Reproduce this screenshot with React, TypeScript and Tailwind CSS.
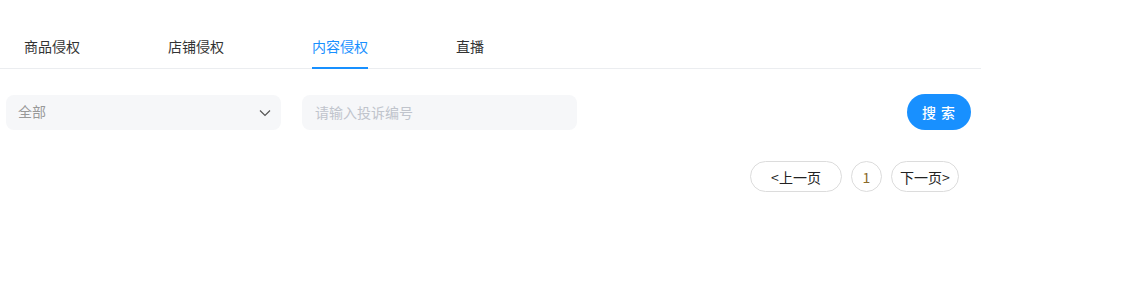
import React, { useState } from 'react';

const tabs = ['商品侵权', '店铺侵权', '内容侵权', '直播'];

const App = () => {
  const [active, setActive] = useState(2);
  const [keyword, setKeyword] = useState('');

  return (
    <div className="w-[981px] bg-white font-['Noto_Sans_CJK_SC','Noto_Sans',sans-serif]">
      {/* Tabs */}
      <div className="flex gap-[88px] border-b border-[#ebedf0] pl-6 pt-[36px]">
        {tabs.map((t, i) => (
          <button
            key={t}
            onClick={() => setActive(i)}
            className={`relative pb-[11px] text-sm leading-[21px] ${i === active ? 'text-[#1890ff]' : 'text-[#333]'}`}
          >
            {t}
            {i === active && <span className="absolute -bottom-px left-0 h-[2px] w-full bg-[#1890ff]"></span>}
          </button>
        ))}
      </div>

      {/* Filters */}
      <div className="mt-[25px] flex items-center pl-[6px] pr-[10px]">
        <div className="flex h-[35px] w-[275px] items-center justify-between rounded-[8px] bg-[#f6f7f9] pl-3 pr-[10px]">
          <span className="pb-[3px] text-sm text-[#999]">全部</span>
          <svg width="12" height="8" viewBox="0 0 12 8" fill="none" className="mt-[1px]">
            <path d="M1 1.5 L6 6.5 L11 1.5" stroke="#555" strokeWidth="1.2" />
          </svg>
        </div>
        <input
          value={keyword}
          onChange={e => setKeyword(e.target.value)}
          placeholder="请输入投诉编号"
          className="ml-[21px] h-[35px] w-[275px] rounded-[8px] bg-[#f6f7f9] px-[13px] text-sm text-[#333] outline-none placeholder:text-[#c0c4cc]"
        />
        <button className="ml-auto h-9 w-16 rounded-full bg-[#1890ff] text-sm font-medium tracking-[1px] text-white">
          搜 索
        </button>
      </div>

      {/* Pagination */}
      <div className="mt-[31px] flex justify-end gap-[9px] pr-[22px]">
        <button className="h-[31px] w-[92px] rounded-full border border-[#dcdcdc] text-sm text-[#222]">&lt;上一页</button>
        <button className="h-[31px] w-[31px] rounded-full border border-[#dcdcdc] text-sm text-[#8a6a2a]">1</button>
        <button className="h-[31px] w-[68px] rounded-full border border-[#dcdcdc] text-sm text-[#222]">下一页&gt;</button>
      </div>
      <div className="h-[95px]"></div>
    </div>
  );
};

export default App;
